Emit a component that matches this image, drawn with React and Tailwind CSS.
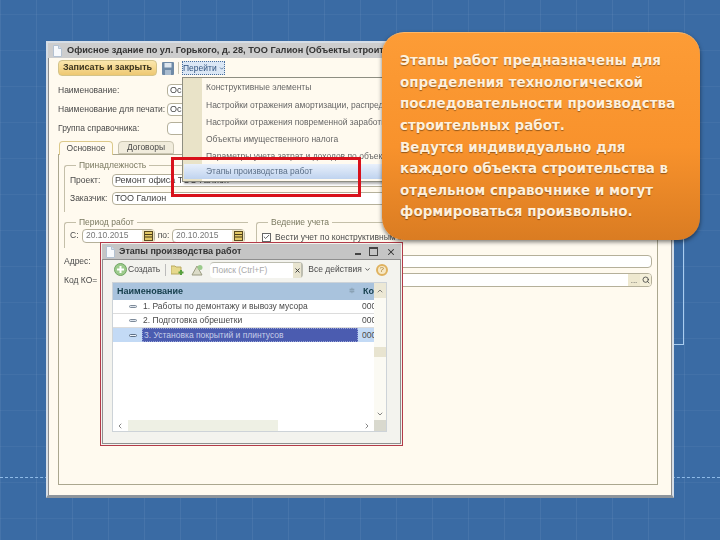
import React from 'react';
import { Search, Check, X, ChevronDown, ChevronUp, ChevronLeft, ChevronRight } from 'lucide-react';

const menuItems = [
  'Конструктивные элементы',
  'Настройки отражения амортизации, распределения',
  'Настройки отражения повременной заработной платы',
  'Объекты имущественного налога',
  'Параметры учета затрат и доходов по объектам',
];

const rows = [
  '1. Работы по демонтажу и вывозу мусора',
  '2. Подготовка обрешетки',
];

function DocIcon() {
  return (
    <svg width="9" height="12" viewBox="0 0 9 12" className="shrink-0">
      <path d="M.5.5h5l3 3v8H.5z" fill="#f7f9fc" stroke="#b4c2d2" />
      <path d="M5.500.5V3.500h3" fill="#d5e0ec" stroke="#b4c2d2" />
    </svg>
  );
}

function CalendarIcon() {
  return (
    <span className="flex h-full w-[12px] shrink-0 items-center justify-center bg-[#eee5c4]">
      <svg width="9" height="10" viewBox="0 0 9 10">
        <rect x="0.500" y="0.500" width="8" height="9" fill="#e3c966" stroke="#5a4a20" />
        <path d="M1 3.500h7M1 6h7" stroke="#4a3c18" />
      </svg>
    </span>
  );
}

function DateField({ value }) {
  return (
    <span className="flex h-[14px] w-[73px] items-center rounded-sm border border-[#b5b09a] bg-white pl-[3px]">
      <span className="flex-1 text-[8.500px] text-[#777]">{value}</span>
      <CalendarIcon />
    </span>
  );
}

function Input({ className = '', children }) {
  return (
    <div className={`flex items-center rounded-sm border border-[#b5b09a] bg-white pl-[2px] text-[9px] text-[#444] ${className}`}>
      {children}
    </div>
  );
}

export default function App() {
  return (
    <div className="relative h-[540px] w-[720px] overflow-hidden bg-[#3a6ba4] bg-[linear-gradient(#ffffff0a_1px,transparent_1px),linear-gradient(90deg,#ffffff10_1px,transparent_1px)] bg-[size:36px_36px] bg-[position:0_14px] font-['Liberation_Sans',sans-serif] text-[#4a4a4a]">
      {/* slide decoration */}
      <div className="absolute left-0 right-0 top-[477px] border-t border-dashed border-[#8fbbe8]" />
      <div className="absolute left-[660px] top-[40px] h-[305px] w-[24px] border-b border-r border-[#a9cdf0]" />

      {/* main window */}
      <div className="absolute left-[46px] top-[41px] flex h-[457px] w-[628px] flex-col border-2 border-b-[3px] border-[#d5dde6] border-b-[#8e959c] blur-[0.3px]">
        <div className="flex h-[15px] shrink-0 items-center gap-[5px] bg-[#cdcdcd] pl-[5px] text-[9.200px] font-bold whitespace-nowrap text-[#333]">
          <DocIcon />
          <span>Офисное здание по ул. Горького, д. 28, ТОО Галион (Объекты строительства)</span>
        </div>

        <div className="flex min-h-0 flex-1 flex-col border-l border-r border-[#8c8c8c] bg-[#fffaef] pl-[9px] pr-[13px] pb-[10px]">
          <div className="mt-[2px] flex h-[16px] items-center">
            <button className="flex h-[16px] w-[99px] items-center justify-center rounded-sm border border-[#d4c48a] bg-[linear-gradient(#fbe7ad,#eec872)] text-[9px] font-bold whitespace-nowrap text-[#3a3420]">Записать и закрыть</button>
            <svg width="12" height="13" viewBox="0 0 12 13" className="ml-[5px]">
              <rect width="12" height="13" rx="1" fill="#6f8aa6" />
              <rect x="2.500" y="1" width="7" height="4.500" fill="#dfe7ef" />
              <rect x="3" y="8" width="6" height="5" fill="#a9bccf" />
            </svg>
            <span className="ml-[4px] h-[12px] border-l border-[#c9c4b0]" />
            <span className="ml-[3px] flex h-[14px] w-[43px] items-center justify-center gap-[2px] border border-dotted border-[#4a6f9c] bg-[#dbe7f5] text-[8.500px] text-[#2f527e]">
              Перейти <ChevronDown size={7} strokeWidth={3} />
            </span>
          </div>

          <div className="mt-[8px] flex h-[13px] items-center">
            <span className="w-[109px] text-[8.500px] whitespace-nowrap">Наименование:</span>
            <Input className="h-[13px] flex-1">Основное</Input>
          </div>
          <div className="mt-[6px] flex h-[13px] items-center">
            <span className="w-[109px] text-[8.500px] whitespace-nowrap">Наименование для печати:</span>
            <Input className="h-[13px] flex-1">Основное</Input>
          </div>
          <div className="mt-[6px] flex h-[13px] items-center">
            <span className="w-[109px] text-[8.500px] whitespace-nowrap">Группа справочника:</span>
            <Input className="h-[13px] flex-1" />
          </div>

          <div className="mt-[5px] flex h-[14px] items-end gap-[5px] pl-[1px]">
            <span className="relative top-px flex h-[14px] w-[54px] items-center justify-center rounded-t-[4px] border border-b-0 border-[#dcc98a] bg-[#fffaef] text-[8.500px]">Основное</span>
            <span className="flex h-[13px] w-[56px] items-center justify-center rounded-t-[4px] border border-[#c9c4b0] bg-[#f1ecdc] text-[8.500px]">Договоры</span>
          </div>

          <div className="flex min-h-0 flex-1 flex-col border border-[#aba78f] px-[5px]">
            <div className="mt-[10px] h-[47px] rounded-tl-[3px] border-l border-t border-[#c4bfa9] pl-[5px]">
              <div className="-mt-[7px] ml-[6px] w-fit bg-[#fffaef] px-[3px] text-[8.500px] text-[#7a7960]">Принадлежность</div>
              <div className="mt-[2px] flex h-[13px] items-center">
                <span className="w-[42px] text-[8.500px]">Проект:</span>
                <Input className="h-[13px] flex-1 whitespace-nowrap">Ремонт офиса ТОО Галион</Input>
              </div>
              <div className="mt-[5px] flex h-[13px] items-center">
                <span className="w-[42px] text-[8.500px]">Заказчик:</span>
                <Input className="h-[13px] flex-1">ТОО Галион</Input>
              </div>
            </div>

            <div className="mt-[10px] flex h-[26px] gap-[8px]">
              <div className="w-[184px] rounded-tl-[3px] border-l border-t border-[#c4bfa9] pl-[5px]">
                <div className="-mt-[7px] ml-[6px] w-fit bg-[#fffaef] px-[3px] text-[8.500px] text-[#7a7960]">Период работ</div>
                <div className="flex items-center">
                  <span className="w-[12px] text-[8.500px]">С:</span>
                  <DateField value="20.10.2015" />
                  <span className="w-[17px] text-center text-[8.500px]">по:</span>
                  <DateField value="20.10.2015" />
                </div>
              </div>
              <div className="flex-1 rounded-tl-[3px] border-l border-t border-[#c4bfa9] pl-[5px]">
                <div className="-mt-[7px] ml-[6px] w-fit bg-[#fffaef] px-[3px] text-[8.500px] text-[#7a7960]">Ведение учета</div>
                <div className="mt-[2px] flex items-center gap-[4px]">
                  <span className="flex h-[9px] w-[9px] items-center justify-center border border-[#666] bg-white"><Check size={8} strokeWidth={3} /></span>
                  <span className="text-[8.500px] whitespace-nowrap">Вести учет по конструктивным элементам</span>
                </div>
              </div>
            </div>

            <div className="mt-[7px] flex h-[13px] items-center">
              <span className="w-[36px] text-[8.500px]">Адрес:</span>
              <Input className="h-[13px] flex-1" />
            </div>
            <div className="mt-[5px] flex h-[14px] items-center">
              <span className="w-[36px] text-[8.500px] whitespace-nowrap">Код КО=</span>
              <Input className="h-[14px] flex-1 justify-end overflow-hidden">
                <span className="flex h-full w-[12px] items-end justify-center bg-[#eee8cf] text-[8px] leading-[10px]">...</span>
                <span className="flex h-full w-[11px] items-center justify-center bg-[#f4efd9]"><Search size={8} strokeWidth={2.500} /></span>
              </Input>
            </div>
          </div>
        </div>
      </div>

      {/* go-to menu */}
      <div className="absolute left-[182px] top-[77px] flex h-[105px] w-[210px] border border-[#8e8e82] bg-[#fffaef] text-[8.500px] text-[#666] shadow-[2px_2px_2px_#0000004d] blur-[0.3px]">
        <div className="w-[19px] shrink-0 bg-[#e9e3c8]" />
        <div className="flex-1 pt-[1px] whitespace-nowrap">
          {menuItems.map(item => (
            <div key={item} className="flex h-[17.300px] items-center pl-[4px]">{item}</div>
          ))}
        </div>
        <div className="absolute bottom-[2px] left-[1px] right-0 flex h-[15px] items-center bg-[linear-gradient(#e9f0fb,#bfd3ef)] pl-[22px] text-[#5b6f88]">Этапы производства работ</div>
      </div>

      {/* highlight frame */}
      <div className="absolute left-[171px] top-[157px] h-[40px] w-[190px] border-[3px] border-[#d8111b]" />

      {/* catalogue window */}
      <div className="absolute left-[100px] top-[242px] flex h-[204px] w-[303px] flex-col border border-[#b23a48] bg-[#f3f3ee] p-px">
        <div className="flex h-[15px] shrink-0 items-center bg-[#c5c5c5] pl-[4px] text-[#333] blur-[0.3px]">
          <DocIcon />
          <span className="ml-[4px] flex-1 text-[9px] font-bold whitespace-nowrap">Этапы производства работ</span>
          <span className="mr-[8px] mt-[5px] h-[2px] w-[6px] bg-[#444]" />
          <span className="mr-[8px] h-[9px] w-[9px] border border-t-2 border-[#444]" />
          <X size={10} strokeWidth={2.500} className="mr-[5px]" />
        </div>
        <div className="flex min-h-0 flex-1 flex-col border border-[#8f8f8f] pl-[9px] pr-[10px] pb-[11px] blur-[0.3px]">
          <div className="flex h-[19px] shrink-0 items-center text-[8.500px] whitespace-nowrap">
            <svg width="13" height="13" viewBox="0 0 13 13" className="ml-[2px]">
              <circle cx="6.500" cy="6.500" r="6" fill="#9ccb8c" stroke="#6fa363" />
              <path d="M6.500 3v7M3 6.500h7" stroke="#fff" strokeWidth="2" />
            </svg>
            <span className="ml-[1px]">Создать</span>
            <span className="ml-[5px] h-[12px] border-l border-[#bbb]" />
            <svg width="13" height="12" viewBox="0 0 13 12" className="ml-[5px]">
              <path d="M0 2h4l1 1h5v7H0z" fill="#e6d98c" stroke="#b9aa60" />
              <path d="M10 6v5M7.500 8.500h5" stroke="#58a03e" strokeWidth="2" />
            </svg>
            <svg width="13" height="12" viewBox="0 0 13 12" className="ml-[7px]">
              <path d="M1 11 6 2l5 9z" fill="#dcdcc8" stroke="#9a9a80" />
              <circle cx="9" cy="3.500" r="2.500" fill="#9ccb8c" />
            </svg>
            <span className="ml-[6px] flex h-[16px] w-[93px] items-center justify-between rounded-sm border-r-2 border-t border-[#bdbdb0] bg-white pl-[2px] text-[8.500px] text-[#aaa]">
              Поиск (Ctrl+F)
              <span className="flex h-full w-[8px] items-center justify-center bg-[#e9e5d0]"><X size={7} strokeWidth={3} className="text-[#333]" /></span>
            </span>
            <span className="ml-[5px]">Все действия</span>
            <ChevronDown size={7} strokeWidth={3} className="ml-[2px]" />
            <span className="ml-[5px] flex h-[12px] w-[12px] items-center justify-center rounded-full border-2 border-[#dfb25f] bg-[#f6e8c6] text-[8px] text-[#a77a2a]">?</span>
          </div>

          <div className="mt-[3px] flex min-h-0 w-[275px] flex-1 flex-col border border-[#cdd3d8] bg-white">
            <div className="flex min-h-0 flex-1">
              <div className="flex min-w-0 flex-1 flex-col text-[8.500px] whitespace-nowrap">
                <div className="flex h-[17px] shrink-0 items-center bg-[#a9c3dd] pl-[4px] text-[9px] font-bold text-[#18414f]">
                  <span className="flex-1">Наименование</span>
                  <span className="mr-[8px] text-[7px] text-[#8aa2b5]">≑</span>
                  <span className="w-[11px]">Ко</span>
                </div>
                {rows.map(row => (
                  <div key={row} className="flex h-[14px] shrink-0 items-center border-b border-[#dcdcdc]">
                    <span className="ml-[16px] h-[3px] w-[8px] rounded-sm border border-[#7d8a99] bg-[#dfe6ee]" />
                    <span className="ml-[6px] flex-1">{row}</span>
                    <span className="w-[12px] overflow-hidden">000</span>
                  </div>
                ))}
                <div className="flex h-[14px] shrink-0 items-center bg-[#c3daf5]">
                  <span className="ml-[16px] h-[3px] w-[8px] rounded-sm border border-[#5d6f85] bg-[#eef3f8]" />
                  <span className="ml-[5px] flex h-full flex-1 items-center border border-dotted border-[#9aa5d8] bg-[#4b5cb0] pl-[1px] text-[#c6cde8]">3. Установка покрытий и плинтусов</span>
                  <span className="ml-[4px] w-[12px] overflow-hidden">000</span>
                </div>
              </div>
              <div className="flex w-[12px] shrink-0 flex-col items-center bg-[#fbfaf3]">
                <div className="flex h-[15px] w-full items-center justify-center bg-[#ece8d5]"><ChevronUp size={8} /></div>
                <div className="mt-[49px] h-[10px] w-full bg-[#e8e4d0]" />
                <ChevronDown size={8} className="mb-[2px] mt-auto" />
              </div>
            </div>
            <div className="flex h-[11px] shrink-0 items-center">
              <ChevronLeft size={8} className="ml-[3px]" />
              <span className="ml-[4px] h-full w-[150px] bg-[#eef0e4]" />
              <span className="flex-1" />
              <ChevronRight size={8} className="mr-[3px]" />
              <span className="h-full w-[12px] bg-[#d9d9ce]" />
            </div>
          </div>
        </div>
      </div>

      {/* orange callout */}
      <div className="absolute left-[382px] top-[32px] flex h-[208px] w-[318px] items-center rounded-[22px] border-t border-[#ffb868] bg-[linear-gradient(#fd9c36,#f8922c_55%,#da7c22)] pl-[18px] font-['DejaVu_Sans',sans-serif] text-[13.500px] leading-[21.600px] font-bold text-[#fff0dc] shadow-[0_2px_4px_#00000080] [text-shadow:0_1px_1px_#00000066]">
        <p>
          Этапы работ предназначены для<br />
          определения технологической<br />
          последовательности производства<br />
          строительных работ.<br />
          Ведутся индивидуально для<br />
          каждого объекта строительства в<br />
          отдельном справочнике и могут<br />
          формироваться произвольно.
        </p>
      </div>
    </div>
  );
}
